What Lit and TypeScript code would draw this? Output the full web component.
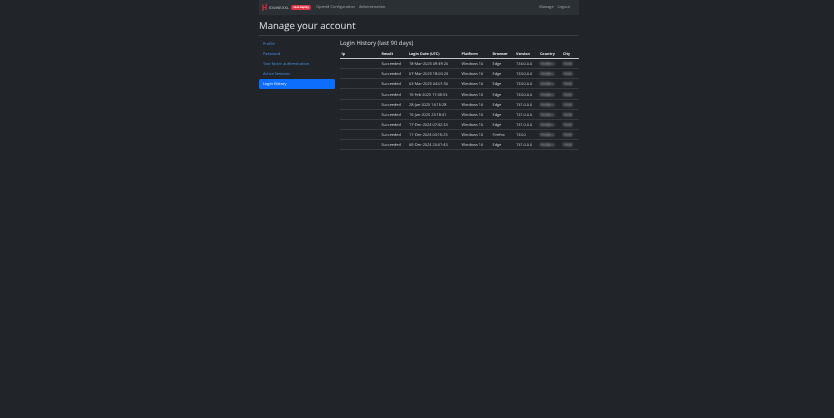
import { LitElement, html, css, svg } from "lit";
import { customElement } from "lit/decorators.js";

const rows = [
  ["18-Mar-2025 09:49:20", "Windows 10", "Edge", "134.0.0.0"],
  ["07-Mar-2025 18:03:24", "Windows 10", "Edge", "133.0.0.0"],
  ["03-Mar-2025 04:01:50", "Windows 10", "Edge", "133.0.0.0"],
  ["16-Feb-2025 17:46:53", "Windows 10", "Edge", "133.0.0.0"],
  ["28-Jan-2025 14:16:28", "Windows 10", "Edge", "131.0.0.0"],
  ["16-Jan-2025 23:18:41", "Windows 10", "Edge", "131.0.0.0"],
  ["17-Dec-2024 07:42:33", "Windows 10", "Edge", "131.0.0.0"],
  ["11-Dec-2024 03:16:25", "Windows 10", "Firefox", "133.0"],
  ["06-Dec-2024 20:01:43", "Windows 10", "Edge", "131.0.0.0"],
];
const nav = ["Profile", "Password", "Two-factor authentication", "Active Sessions", "Login History"];

@customElement("app-root")
export class AppRoot extends LitElement {
  static styles = css`
    :host {
      display: block;
      min-height: 418px;
      box-sizing: border-box;
      padding-left: 4px;
      background: #212529;
      color: #c9cdd0;
      font-family: "Open Sans", "Liberation Sans", sans-serif;
      font-size: 3.85px;
      line-height: 6px;
      text-rendering: geometricPrecision;
    }
    .wrap { width: 320px; margin: 0 auto; filter: blur(0.25px); }
    .bar {
      height: 15px;
      background: #2b3035;
      display: flex;
      align-items: center;
      padding: 0 9px 0 3px;
      box-sizing: border-box;
      color: rgba(222, 226, 230, 0.6);
    }
    .logo { display: block; width: 6px; height: 9px; margin-right: 1px; flex: none; }
    .brand { font-size: 3.6px; letter-spacing: 0.15px; color: #c9ccd0; font-family: "Liberation Sans", sans-serif; white-space: nowrap; }
    .badge {
      background: #dc3545;
      color: #fff;
      border-radius: 2px;
      font-size: 2.6px;
      font-weight: 700;
      line-height: 4.5px;
      margin: 0 5px 0 2px;
      width: 20px;
      text-align: center;
      white-space: nowrap;
      flex: none;
    }
    .links { display: flex; gap: 4px; white-space: nowrap; }
    .right { margin-left: auto; display: flex; gap: 4px; white-space: nowrap; }
    h1 {
      font-size: 9.6px;
      font-weight: 500;
      line-height: 14px;
      margin: 0;
      padding: 4px 0 2px;
      color: #dfe2e5;
    }
    .rule { border-top: 0.5px solid #3a3f44; margin-bottom: 3px; }
    .cols { display: flex; gap: 5px; }
    .side { width: 76px; flex: none; }
    .item {
      display: block;
      height: 10px;
      line-height: 10px;
      padding: 0.7px 4px 0;
      box-sizing: border-box;
      color: #4d8fe8;
      border-radius: 1.5px;
    }
    .item.on { background: #0d6efd; color: #f2f6ff; }
    .main { flex: 1; }
    h2 { font-size: 5.9px; font-weight: 500; line-height: 8px; margin: 0 0 2px; color: #dcdfe2; }
    .grid {
      display: grid;
      grid-template-columns: 40px 27.5px 52.5px 31px 23.5px 24px 23px 17.5px;
    }
    .row { display: contents; }
    .cell {
      height: 10.13px;
      line-height: 9px;
      padding: 1.2px 0 0 1.5px;
      box-sizing: border-box;
      border-bottom: 0.5px solid #373c41;
      white-space: nowrap;
      overflow: hidden;
    }
    .head .cell { font-weight: 700; height: 10px; border-bottom: 0.75px solid #c3c6c9; color: #dfe2e5; font-size: 3.7px; }
    .blur { color: #adb0b3; filter: blur(0.9px); font-size: 3.9px; font-weight: 700; }
  `;

  render() {
    return html`
      <div class="wrap">
        <div class="bar">
          <svg class="logo" viewBox="0 0 6 9">
            ${svg`<path d="M1 1.5V8M4.2 0.5V7M1 5L4.2 4" stroke="#d8283c" stroke-width="1.2" fill="none" />`}
          </svg>
          <span class="brand">IDSINEXXL</span>
          <span class="badge">SaaS deploy</span>
          <div class="links"><span>OpenId Configuration</span><span>Administration</span></div>
          <div class="right"><span>Manage</span><span>Logout</span></div>
        </div>
        <h1>Manage your account</h1>
        <div class="rule"></div>
        <div class="cols">
          <div class="side">
            ${nav.map((n, i) => html`<span class="item ${i === 4 ? "on" : ""}">${n}</span>`)}
          </div>
          <div class="main">
            <h2>Login History (last 90 days)</h2>
            <div class="grid">
              <div class="row head">
                ${["Ip", "Result", "Login Date (UTC)", "Platform", "Browser", "Version", "Country", "City"].map(
                  (h) => html`<div class="cell">${h}</div>`
                )}
              </div>
              ${rows.map(
                (r) => html`<div class="row">
                  <div class="cell"></div>
                  <div class="cell">Succeeded</div>
                  <div class="cell">${r[0]}</div>
                  <div class="cell">${r[1]}</div>
                  <div class="cell">${r[2]}</div>
                  <div class="cell">${r[3]}</div>
                  <div class="cell"><span class="blur">Hidden</span></div>
                  <div class="cell"><span class="blur">Hidd</span></div>
                </div>`
              )}
            </div>
          </div>
        </div>
      </div>
    `;
  }
}
